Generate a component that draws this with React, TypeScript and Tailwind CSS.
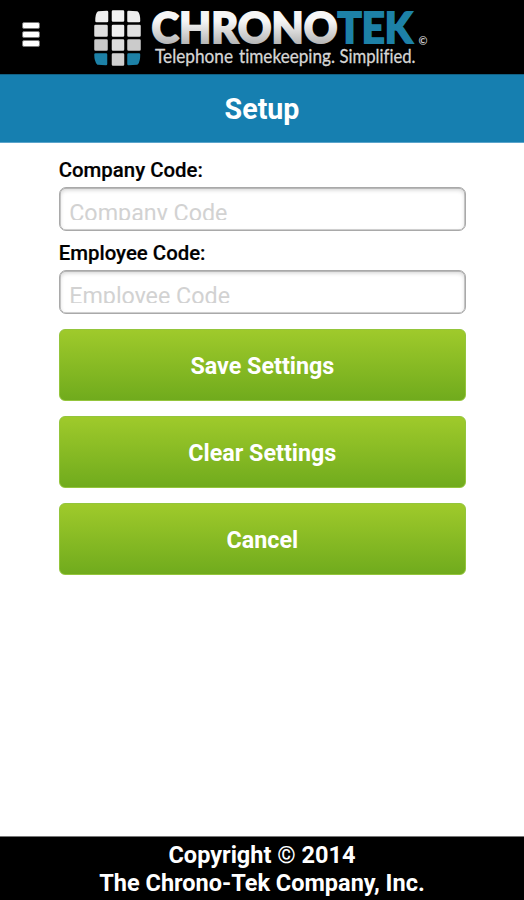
import React from "react";

function GlobeTiles() {
  return (
    <g strokeLinejoin="round" strokeWidth="2.500">
      <path d="M98.500 12.500 107 12V21H96.500Q96.500 14 98.500 12.500Z" fill="#eee" stroke="#eee" />
      <path d="M113 11.500H123V20.500H113Z" fill="#f3f3f3" stroke="#f3f3f3" />
      <path d="M128.500 12 137 12.500Q139 14 139 21H128.500Z" fill="#eee" stroke="#eee" />
      <path d="M95.500 26H106.500V35.500H95.500Z" fill="#dedede" stroke="#dedede" />
      <path d="M113 26H123V35.500H113Z" fill="#eeeeee" stroke="#eeeeee" />
      <path d="M128.500 26H139.500V35.500H128.500Z" fill="#e0e0e0" stroke="#e0e0e0" />
      <path d="M95.500 40.500H106.500V49.500H95.500Z" fill="#c9c9c9" stroke="#c9c9c9" />
      <path d="M113 40.500H123V49.500H113Z" fill="#dedede" stroke="#dedede" />
      <path d="M128.500 40.500H139.500V49.500H128.500Z" fill="#cbcbcb" stroke="#cbcbcb" />
      <path d="M95.500 54.500H106V64L98 63.500Q95.500 61 95.500 54.500Z" fill="#1d81a7" stroke="#1d81a7" />
      <path d="M113 54.500H123V64.500H113Z" fill="#cfcfcf" stroke="#cfcfcf" />
      <path d="M128.500 54.500H139Q139 61 137 63.500L128.500 64Z" fill="#1d81a7" stroke="#1d81a7" />
    </g>
  );
}

function Logo() {
  return (
    <svg width="345" height="74" viewBox="90 0 345 74" className="ml-[50px] block shrink-0 font-['Lato',sans-serif] [font-variant-ligatures:none]">
      <defs>
        <linearGradient id="metal" gradientUnits="userSpaceOnUse" x1="0" y1="11" x2="0" y2="44">
          <stop offset="0.3" stopColor="#f6f6f6" />
          <stop offset="1" stopColor="#b5b5b5" />
        </linearGradient>
      </defs>
      <GlobeTiles />
      <g fontSize="42" fontWeight="900" strokeWidth="1.800" strokeLinejoin="miter">
        <text x="151.500" y="43" fill="url(#metal)" stroke="url(#metal)" textLength="186" lengthAdjust="spacingAndGlyphs">CHRONO</text>
        <text x="337.500" y="43" fill="#1d81a7" stroke="#1d81a7" textLength="75" lengthAdjust="spacingAndGlyphs">TEK</text>
      </g>
      <text x="418.500" y="45" fontSize="11" fontWeight="700" fill="#c8c8c8" textLength="9" lengthAdjust="spacingAndGlyphs">©</text>
      <g fontSize="19" fill="#d6d6d6" stroke="#d6d6d6" strokeWidth="0.300">
        <text x="155" y="63" textLength="78" lengthAdjust="spacingAndGlyphs">Telephone</text>
        <text x="239" y="63" textLength="96" lengthAdjust="spacingAndGlyphs">timekeeping.</text>
        <text x="339.500" y="63" textLength="76" lengthAdjust="spacingAndGlyphs">Simplified.</text>
      </g>
    </svg>
  );
}

function Field({ label, placeholder }: { label: string; placeholder: string }) {
  return (
    <div className="h-[83px]">
      <div className="h-[29px] text-[20.400px] leading-[24px] font-medium text-black [-webkit-text-stroke:0.2px_black]">{label}</div>
      <div className="h-[44px] rounded-[7px] border-[1.500px] border-[#a9a9a9] px-[9.500px] pt-[12px] shadow-[inset_0_2px_4px_rgba(0,0,0,0.18),inset_0_0_0_0.500px_#a9a9a9]">
        <div className="h-[20px] overflow-hidden text-[23.300px] leading-[27px] text-[#d2d2d2]">{placeholder}</div>
      </div>
    </div>
  );
}

function ActionButton({ children }: { children: React.ReactNode }) {
  return (
    <button className="block h-[72px] w-full rounded-md border border-[#94c53c] bg-linear-to-b from-[#9fca2b] to-[#70ab1d] pt-[2px] text-[23.300px] leading-[28px] font-bold text-white">
      {children}
    </button>
  );
}

export default function App() {
  return (
    <div className="flex h-[900px] w-[524px] flex-col bg-white font-['Roboto',sans-serif]">
      <header className="flex h-[74px] shrink-0 items-start bg-black">
        <button aria-label="Menu" className="mt-[22px] ml-[22px] flex w-[18px] flex-col gap-[2px]">
          <span className="h-[7px] w-full rounded-[2px] border border-[#777] bg-white" />
          <span className="h-[7px] w-full rounded-[2px] border border-[#777] bg-white" />
          <span className="h-[7px] w-full rounded-[2px] border border-[#777] bg-white" />
        </button>
        <Logo />
      </header>
      <h1 className="flex h-[69px] shrink-0 items-center justify-center border-t border-b border-t-[#126184] border-b-[#5ba4cb] bg-[#167fb0] pt-[2px] text-[28.600px] font-bold text-white">
        Setup
      </h1>
      <main className="flex-1 px-[58px] pt-[15px]">
        <div className="w-[408px] pl-[0.700px]">
          <Field label="Company Code:" placeholder="Company Code" />
          <Field label="Employee Code:" placeholder="Employee Code" />
          <div className="mt-[5px] flex flex-col gap-[15px]">
            <ActionButton>Save Settings</ActionButton>
            <ActionButton>Clear Settings</ActionButton>
            <ActionButton>Cancel</ActionButton>
          </div>
        </div>
      </main>
      <footer className="h-[64px] shrink-0 border-t border-[#777] bg-black pt-[4px] text-center text-[23.500px] leading-[28px] font-bold text-white">
        <div>Copyright © 2014</div>
        <div>The Chrono-Tek Company, Inc.</div>
      </footer>
    </div>
  );
}
